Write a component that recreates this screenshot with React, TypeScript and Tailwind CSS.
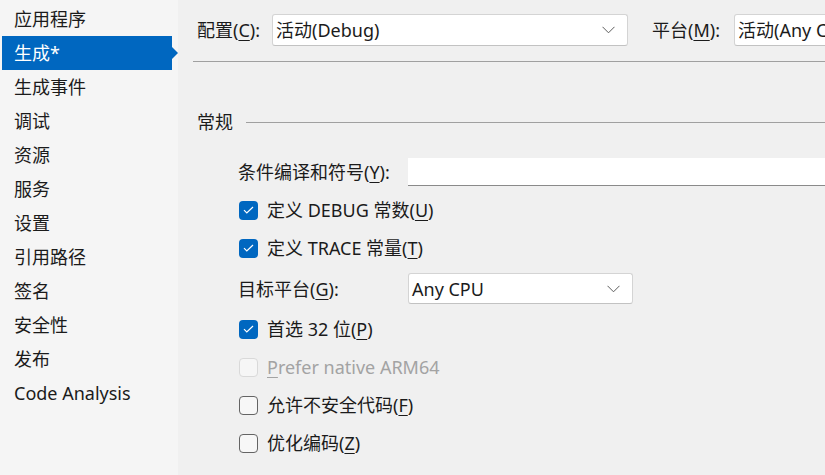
import React from 'react';

const navItems = ['应用程序', '生成*', '生成事件', '调试', '资源', '服务', '设置', '引用路径', '签名', '安全性', '发布', 'Code Analysis'];

const Key = ({ children }: { children: React.ReactNode }) => (
  <span className="underline underline-offset-[3px] decoration-1">{children}</span>
);

const Chevron = () => (
  <svg width="13" height="8" viewBox="0 0 13 8" className="shrink-0">
    <path d="M0.5 0.8 L6.5 6.8 L12.5 0.8" fill="none" stroke="#5c5c5c" strokeWidth="1" />
  </svg>
);

const Select = ({ value, className }: { value: string; className: string }) => (
  <div className={`flex items-center justify-between bg-white border border-[#d4d4d4] border-b-[#c2c2c2] rounded-[3px] pl-[3px] pr-[12px] shrink-0 ${className}`}>
    <span className="whitespace-nowrap">{value}</span>
    <Chevron />
  </div>
);

const Checkbox = ({ checked, disabled }: { checked?: boolean; disabled?: boolean }) => {
  if (checked) {
    return (
      <div className="w-[19px] h-[19px] rounded-[4px] bg-[#0067c0] flex items-center justify-center shrink-0">
        <svg width="11" height="8" viewBox="0 0 11 8">
          <path d="M1 4.2 L3.8 7 L10 1" fill="none" stroke="white" strokeWidth="1.2" />
        </svg>
      </div>
    );
  }
  return (
    <div
      className={`w-[19px] h-[19px] rounded-[4px] border shrink-0 ${
        disabled ? 'border-[#d9d9d9] bg-[#f6f6f6]' : 'border-[#646464] bg-[#f7f7f7]'
      }`}
    />
  );
};

const CheckRow = ({ checked, disabled, children, mt }: { checked?: boolean; disabled?: boolean; children: React.ReactNode; mt?: string }) => (
  <div className={`flex items-center h-[38px] gap-[9px] pl-[1px] ${mt ?? ''} ${disabled ? 'text-[#a3a3a3]' : ''}`}>
    <Checkbox checked={checked} disabled={disabled} />
    <span className="whitespace-nowrap">{children}</span>
  </div>
);

export default function App() {
  return (
    <div
      className="w-[825px] h-[475px] flex overflow-hidden text-[18px] leading-[24px] text-[#1b1b1b]"
      style={{ fontFamily: '"Noto Sans", "Noto Sans CJK SC", sans-serif' }}
    >
      {/* Sidebar */}
      <div className="w-[178px] shrink-0 bg-[#f5f5f5] pt-[2px]">
        {navItems.map((item) => {
          const selected = item === '生成*';
          return (
            <div
              key={item}
              className={`relative ml-[2px] w-[170px] h-[34px] flex items-center pl-[12px] whitespace-nowrap ${
                selected ? 'bg-[#0067c0] text-white' : ''
              }`}
            >
              {item}
              {selected && (
                <div className="absolute right-[-6px] top-[11px] w-0 h-0 border-y-[6px] border-y-transparent border-l-[6px] border-l-[#0067c0]" />
              )}
            </div>
          );
        })}
      </div>

      {/* Main */}
      <div className="flex-1 bg-[#f0f0f0] pl-[15px] pt-[14px] overflow-hidden">
        <div className="flex items-center pl-[4px] h-[32px]">
          <span className="w-[75px] shrink-0 whitespace-nowrap">
            配置(<Key>C</Key>):
          </span>
          <Select value="活动(Debug)" className="w-[356px] h-[32px]" />
          <span className="ml-[24px] w-[82px] shrink-0 whitespace-nowrap">
            平台(<Key>M</Key>):
          </span>
          <Select value="活动(Any CPU)" className="w-[200px] h-[32px]" />
        </div>
        <div className="mt-[15px] h-px bg-[#a0a0a0]" />

        <div className="mt-[48px] flex items-center h-[24px] pl-[4px]">
          <span className="whitespace-nowrap">常规</span>
          <div className="ml-[13px] flex-1 h-px bg-[#a0a0a0]" />
        </div>

        <div className="pl-[45px] mt-[24px]">
          <div className="flex items-center h-[28px]">
            <span className="w-[170px] shrink-0 whitespace-nowrap">
              条件编译和符号(<Key>Y</Key>):
            </span>
            <div className="flex-1 h-[28px] bg-white border-b border-[#8a8a8a]" />
          </div>

          <CheckRow checked mt="mt-[5px]">
            定义 DEBUG 常数(<Key>U</Key>)
          </CheckRow>
          <CheckRow checked>
            定义 TRACE 常量(<Key>T</Key>)
          </CheckRow>

          <div className="flex items-center h-[31px] mt-[6px]">
            <span className="w-[170px] shrink-0 whitespace-nowrap">
              目标平台(<Key>G</Key>):
            </span>
            <Select value="Any CPU" className="w-[225px] h-[31px]" />
          </div>

          <CheckRow checked mt="mt-[6px]">
            首选 32 位(<Key>P</Key>)
          </CheckRow>
          <CheckRow disabled>
            <Key>P</Key>refer native ARM64
          </CheckRow>
          <CheckRow>
            允许不安全代码(<Key>F</Key>)
          </CheckRow>
          <CheckRow>
            优化编码(<Key>Z</Key>)
          </CheckRow>
        </div>
      </div>
    </div>
  );
}
